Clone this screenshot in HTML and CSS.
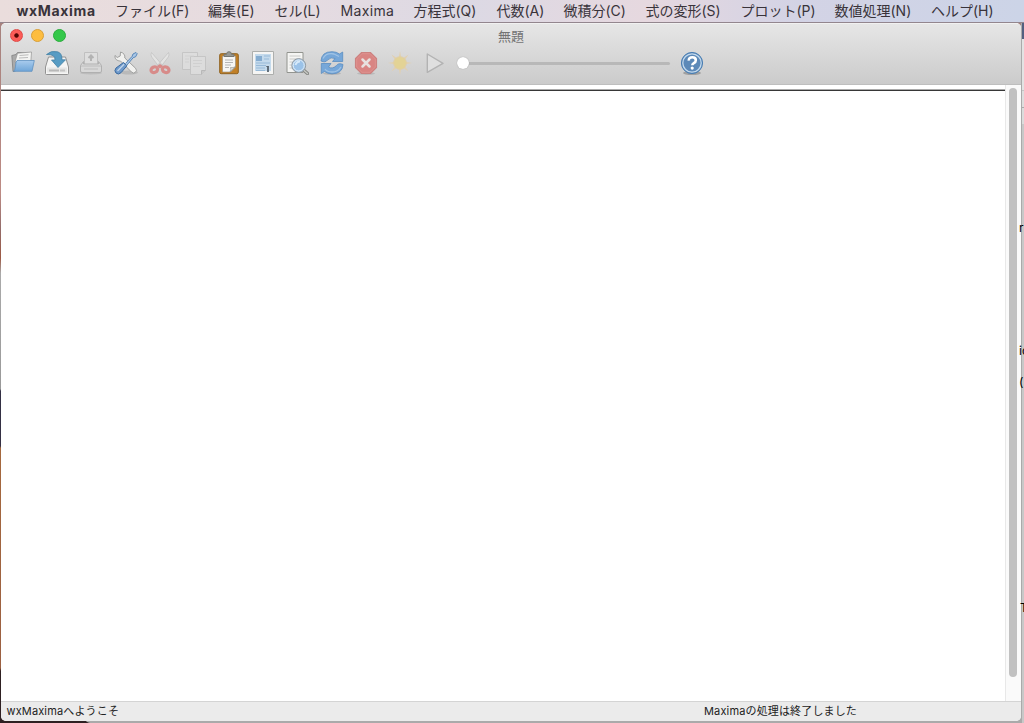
FILE: index.html
```
<!DOCTYPE html>
<html lang="ja">
<head>
<meta charset="utf-8">
<title>wxMaxima</title>
<link rel="stylesheet" href="styles.css">
</head>
<body>
<nav class="menubar">
<span class="app">wxMaxima</span><span>ファイル(F)</span><span>編集(E)</span><span>セル(L)</span><span class="latin">Maxima</span><span>方程式(Q)</span><span>代数(A)</span><span>微積分(C)</span><span>式の変形(S)</span><span>プロット(P)</span><span>数値処理(N)</span><span>ヘルプ(H)</span>
</nav>
<div class="desktop">
<main class="window">
<header class="chrome">
<div class="titlebar">
<div class="lights"><i class="close"></i><i class="min"></i><i class="max"></i></div>
<div class="title">無題</div>
</div>
<div class="toolbar">
<svg class="icon" viewBox="0 0 24 24"><defs><linearGradient id="blue" x1="0" y1="0" x2="0" y2="1"><stop offset="0" stop-color="#a9cbed"/><stop offset="1" stop-color="#6fa6d8"/></linearGradient></defs><path d="M.8 4.500L5 3.500l1.500-2 13 .5v8L3.500 20.500H2z" fill="#aaa" stroke="#808080" stroke-width=".8"/><path d="M6.500 2.200l14-1.200-.7 10H4z" fill="#f4f4f2" stroke="#929292" stroke-width=".7"/><path d="M8.500 4.500l9-.7M8 7l9-.5" stroke="#bbb"/><path d="M6 9.500h17.300L21 20.300H2.500q1.700-1 2-5 .3-5 1.500-5.800z" fill="url(#blue)" stroke="#5f90c0" stroke-width=".8"/></svg>
<svg class="icon" viewBox="0 0 24 24"><path d="M3.500 6h17l3 10v6.500q0 1-1 1h-21q-1 0-1-1V16z" fill="#f5f5f4" stroke="#929292"/><path d="M2 16.500h20v5H2z" fill="#e6e6e5"/><path d="M4.500 19.500h9" stroke="#8a8a8a" stroke-width="2" stroke-dasharray="1 1"/><path d="M15 19.500h5" stroke="#c4c4c4" stroke-width="2"/><path d="M1.500 3.500Q6-.8 12.500.8q4.500 1 4.500 8h3.500L13 16.500 6.500 9h3.500q.5-6-8.500-5.500z" fill="#579cc4" stroke="#4280a4" stroke-width=".8"/></svg>
<svg class="icon dim" viewBox="0 0 24 24"><ellipse cx="12" cy="22" rx="11" ry="1.500" fill="#aaa" opacity=".6"/><path d="M5.500 1.500h13v12h-13z" fill="#e0e0e0" stroke="#bcbcbc"/><path d="M12 10V5M9.500 7L12 4.500 14.500 7" fill="none" stroke="#adadad" stroke-width="2"/><path d="M4.500 10.500l-3 4V20q0 1.500 1.500 1.500h18q1.500 0 1.500-1.500v-5.500l-3-4v2.500h-15z" fill="#dadada" stroke="#ababab"/><path d="M2 15h20M5 18h14" stroke="#b8b8b8"/></svg>
<svg class="icon" viewBox="0 0 24 24"><ellipse cx="15" cy="21.500" rx="9" ry="2" fill="#aaa" opacity=".6"/><path d="M6.500 1l-.3 4-3 1.500L1 4.500C.5 8 3 10 6.500 10l11 11q2 2 4 .2 2-1.700 0-4L10.800 7Q11.500 2.500 6.500 1z" fill="#f1f1ef" stroke="#989a98" stroke-width=".9"/><path d="M11.500 12.500l6.500-7 1-2.500 3-1.500 1.200 1.200-1.500 3-2.500 1-6.200 7.300" fill="#a9c7e6" stroke="#4e7fb4" stroke-width=".9"/><path d="M9.500 11.500l3.500 3.200-6 7q-2.800 2.500-5 .3t0-5z" fill="#6f9acb" stroke="#3b6a9f"/><path d="M3.500 20l6.500-6.700" stroke="#c3d6ea" stroke-width="1.300"/></svg>
<svg class="icon dim" viewBox="0 0 24 24"><path d="M3.500 1.500q-1.200 2.500.2 4.500l8 10.500 2.500-2.500zM20.500 1.500q1.200 2.500-.2 4.500l-8 10.500-2.500-2.500z" fill="#e6e6e5" stroke="#bdbdbd" stroke-width=".7"/><g fill="none" stroke="#d97f7d" stroke-width="3.200"><ellipse cx="6.300" cy="18.700" rx="3.400" ry="2.700" transform="rotate(-25 6.300 18.700)"/><ellipse cx="17.700" cy="18.700" rx="3.400" ry="2.700" transform="rotate(25 17.700 18.700)"/></g><path d="M9 15l3-2 3 2-3 2.500z" fill="#d97f7d"/></svg>
<svg class="icon dim" viewBox="0 0 24 24"><g fill="#dedede" stroke="#bfbfbf" stroke-width=".9"><path d="M.5 1.500h15v17H.5z"/><path d="M8.500 5.500h15v14l-4 4h-11z"/></g><path d="M3 5h9M3 8h4M3 11h4M11 9.500h9M11 12.500h9M11 15.500h7" stroke="#d0d0d0"/><path d="M23.500 19.500h-4v4" fill="#c8c8c8" stroke="#b4b4b4"/></svg>
<svg class="icon" viewBox="0 0 24 24"><rect x="2.700" y="2.700" width="18.600" height="20" rx="1.500" fill="#c18027" stroke="#8f6220"/><path d="M5.500 5h13v11l-5 5h-8z" fill="#f6f6f4" stroke="#918c82" stroke-width=".6"/><path d="M8 9h8M8 11.500h8M8 14h6M8 16.500h4" stroke="#b4b4b4"/><path d="M18.500 15.500l-5.500 5.500q1.500-2 .5-4.500 2.500.8 5-1z" fill="#deded9" stroke="#8b8b86" stroke-width=".6"/><path d="M7 5.500V3.300h2.500Q9.500.7 12 .7t2.500 2.600H17v2.200z" fill="#969894" stroke="#757773"/></svg>
<svg class="icon" viewBox="0 0 24 24"><path d="M1.500.5h21v23h-21z" fill="#f5f5f4" stroke="#adafad"/><path d="M4 3h16v17H4z" fill="#c4daec"/><path d="M5 5h6v5H5z" fill="#85acd0"/><path d="M5 12h14M5 14.500h10M5 17h9M5 19.500h9M13 5h6M13 8h5" stroke="#98bad8"/><path d="M17 15v6" stroke="#56636f" stroke-width="1.800"/><path d="M15.300 15.500h2" stroke="#56636f"/></svg>
<svg class="icon" viewBox="0 0 24 24"><path d="M2 1.500h16v20H2z" fill="#f5f5f3" stroke="#92948f"/><path d="M4.500 5h11M4.500 8h7M4.500 11h3M4.500 14h2M4.500 17h3" stroke="#cacac8"/><path d="M18.500 19l4 3.500" stroke="#858783" stroke-width="3.400" stroke-linecap="round"/><path d="M18.500 19l4 3.500" stroke="#c7c8c4" stroke-width="1.400" stroke-linecap="round"/><circle cx="13.700" cy="14.500" r="6.900" fill="#a9cae9" stroke="#92999f"/><circle cx="13.700" cy="14.500" r="5.500" fill="#9bc2e8" stroke="#e0edf8"/><path d="M10.500 14q1-3.500 4.500-3.500" stroke="#d6e9f9" stroke-width="2" fill="none"/></svg>
<svg class="icon" viewBox="0 0 24 24"><ellipse cx="12" cy="22.500" rx="9" ry="1.500" fill="#999" opacity=".5"/><g fill="#76a7d9" stroke="#5b8dc0" stroke-width=".8"><path d="M1 10Q1.500.7 12 .7q4.500 0 7.500 2.300L22.700 1v9.500H12.500L15 7.500q-4-2-7.500 1.500-2 3-6.500 1z"/><path d="M23 13.500q-.5 9.300-11 9.300-4.500 0-7.500-2.300L1.300 22.500V12.500H11L8.500 16q4 2.500 8-1.500 2-3 6.500-1z"/></g><path d="M3 7.500Q6 1.500 14 3l5 2.500M21 16q-3 5-9 5-5 0-7-3" fill="none" stroke="#a0c3e5" stroke-width="1.300"/></svg>
<svg class="icon" viewBox="0 0 24 24"><ellipse cx="12" cy="22.500" rx="9" ry="1.500" fill="#aaa" opacity=".6"/><path d="M7.500 1.500h9l6 6v9l-6 6h-9l-6-6v-9z" fill="#d98583" stroke="#cc8280" stroke-width="1.200"/><path d="M8 2.700h8l5.300 5.300v8L16 21.300H8L2.700 16V8z" fill="none" stroke="#dd928f"/><path d="M8.500 8.500l7 7M15.500 8.500l-7 7" stroke="#e8e1df" stroke-width="2.500" stroke-linecap="round"/></svg>
<svg class="icon" viewBox="0 0 24 24"><g fill="#e1d0b0"><path d="M12 0l1.500 8h-3zM12 24l1.500-8h-3zM0 12l8-1.500v3zM24 12l-8-1.500v3zM3.500 3.500l6 4-2 2zM20.500 3.500l-6 4 2 2zM3.500 20.500l4-6 2 2zM20.500 20.500l-4-6-2 2z"/></g><circle cx="12" cy="12" r="6.300" fill="#e3d395" stroke="#e1cfa6"/></svg>
<svg class="icon" viewBox="0 0 24 24"><path d="M4.300 3l15.700 9.300L4.300 21.300z" fill="#dfdfdf" stroke="#b3b3b3" stroke-width="1.400" stroke-linejoin="round"/></svg>
<div class="slider"><span class="track"></span><span class="knob"></span></div>
<svg class="icon" viewBox="0 0 24 24"><ellipse cx="12" cy="22" rx="9" ry="2" fill="#8c8c8c" opacity=".7"/><circle cx="12" cy="12" r="10.600" fill="#5586b6" stroke="#4a7eb3"/><circle cx="12" cy="12" r="9.200" fill="#5c89b8" stroke="#c5daed" stroke-width="1.300"/><path d="M8.800 9.700q-.2-3.400 3.500-3.400 3.500 0 3.500 2.900 0 1.800-2 2.900-1.500.8-1.500 2.100" fill="none" stroke="#fff" stroke-width="2.600"/><circle cx="12.200" cy="17.100" r="1.600" fill="#fff"/></svg>
</div>
</header>
<section class="content">
<div class="worksheet"><div class="cursor"></div></div>
<div class="scrollbar"><div class="thumb"></div></div>
</section>
<footer class="status"><span>wxMaximaへようこそ</span><span>Maximaの処理は終了しました</span></footer>
</main>
<div class="behind"><span class="r">r</span><span class="ic">ic</span><span class="paren">(</span><span class="t">T</span></div>
</div>
</body>
</html>
```
FILE: styles.css
```
* { box-sizing: border-box; }
body {
  margin: 0;
  width: 1024px;
  height: 723px;
  overflow: hidden;
  display: flex;
  flex-direction: column;
  font-family: Inter, "Noto Sans CJK JP", sans-serif;
}
.menubar {
  height: 23px;
  flex: none;
  padding-left: 16.500px;
  display: grid;
  grid-template-columns: 98.500px 93px 66.500px 66px 73px 83px 67px 82px 95px 94px 96.500px 80px;
  font-size: 14px;
  line-height: 22px;
  white-space: nowrap;
  color: #39333a;
  background: linear-gradient(90deg, #eadddc, #e5dbe1 30%, #dcd9e4 46%, #e6d8df 63%, #d3d3e5 78%, #ccd4e7);
  border-bottom: 1px solid #93868e;
}
.menubar .app { font-weight: 700; letter-spacing: .65px; }
.menubar .latin { letter-spacing: .35px; }
.desktop {
  height: 700px;
  flex: none;
  display: flex;
  padding-left: 1px;
  background: linear-gradient(#a6827e 0, #bd8b84 170px, #946d6b 205px, #9d5944 235px, #aaa 250px, #999 366px, #333044 368px, #353044 423px, #a5683e 425px, #9b6042 645px, #2e2022 648px);
}
.window {
  width: 1020px;
  height: 698px;
  flex: none;
  display: flex;
  flex-direction: column;
  border-radius: 5px;
  overflow: hidden;
  background: #fff;
  box-shadow: 84px 2px 0 #aaa;
}
.chrome {
  height: 62px;
  background: linear-gradient(#e6e6e6, #cbcbcb);
  border-top: 1px solid #f1f1f1;
  border-bottom: 1px solid #bebebe;
}
.titlebar {
  display: grid;
  grid-template-columns: 78px 1fr 78px;
  height: 23px;
  align-items: center;
}
.lights { display: flex; gap: 8.500px; padding-left: 8.500px; }
.lights i { width: 13px; height: 13px; border-radius: 50%; border: .5px solid #d89f39; }
.lights .close { background: radial-gradient(circle, #520603 0 1.800px, #fc5b57 2.600px); border-color: #df4945; }
.lights .min { background: #fdbd40; }
.lights .max { background: #34c84a; border-color: #2bac3d; }
.title { color: #737373; font-size: 13px; line-height: 20px; text-align: center; }
.toolbar { display: flex; align-items: center; height: 32px; padding-left: 9.500px; gap: 10.350px; }
.icon { width: 24px; height: 24px; flex: none; }
.dim { opacity: .85; }
.slider { width: 214px; height: 24px; display: grid; align-items: center; margin: 0 -1px 0 0; }
.slider > span { grid-area: 1 / 1; }
.track { height: 3px; background: #b8b8b8; border-radius: 2px; margin: 0 1px 0 3px; }
.knob { width: 12px; height: 12px; background: #fff; border-radius: 50%; box-shadow: 0 0 1px #888; }
.content { height: 616px; display: flex; }
.worksheet { width: 1004px; padding-top: 4px; }
.cursor { height: 2px; border-top: 1px solid #aaa; border-bottom: 1px solid #373737; }
.scrollbar { width: 16px; padding: 3px 0 0 3px; background: #fafafa; border-left: 1px solid #e8e8e8; }
.thumb { width: 8px; height: 589px; background: #c1c1c1; border-radius: 4px; }
.status {
  height: 20px;
  display: grid;
  grid-template-columns: 697.500px 1fr;
  padding-left: 5.500px;
  border-top: 1px solid #d4d4d4;
  background: #ebebeb;
  color: #222;
  font-size: 11px;
  line-height: 18px;
}
.status span { letter-spacing: .15px; }
.behind {
  width: 3px;
  height: 700px;
  display: flex;
  flex-direction: column;
  border-left: 1px solid #aaa;
  background: linear-gradient(#536080 0 16px, #e3e3e3 16px 67px, #c5c5c5 67px 68px, #dedede 68px 84px, #aaa 84px 85px, #dcdcdc 85px 101px, #c8c8c8 101px);
  font-size: 12px;
  line-height: 14px;
}
.behind span { margin-left: -3px; }
.behind .r { margin-top: 198px; }
.behind .ic { margin-top: 109px; }
.behind .paren { margin-top: 17px; }
.behind .t { margin-top: 212px; margin-left: -2px; }
```
